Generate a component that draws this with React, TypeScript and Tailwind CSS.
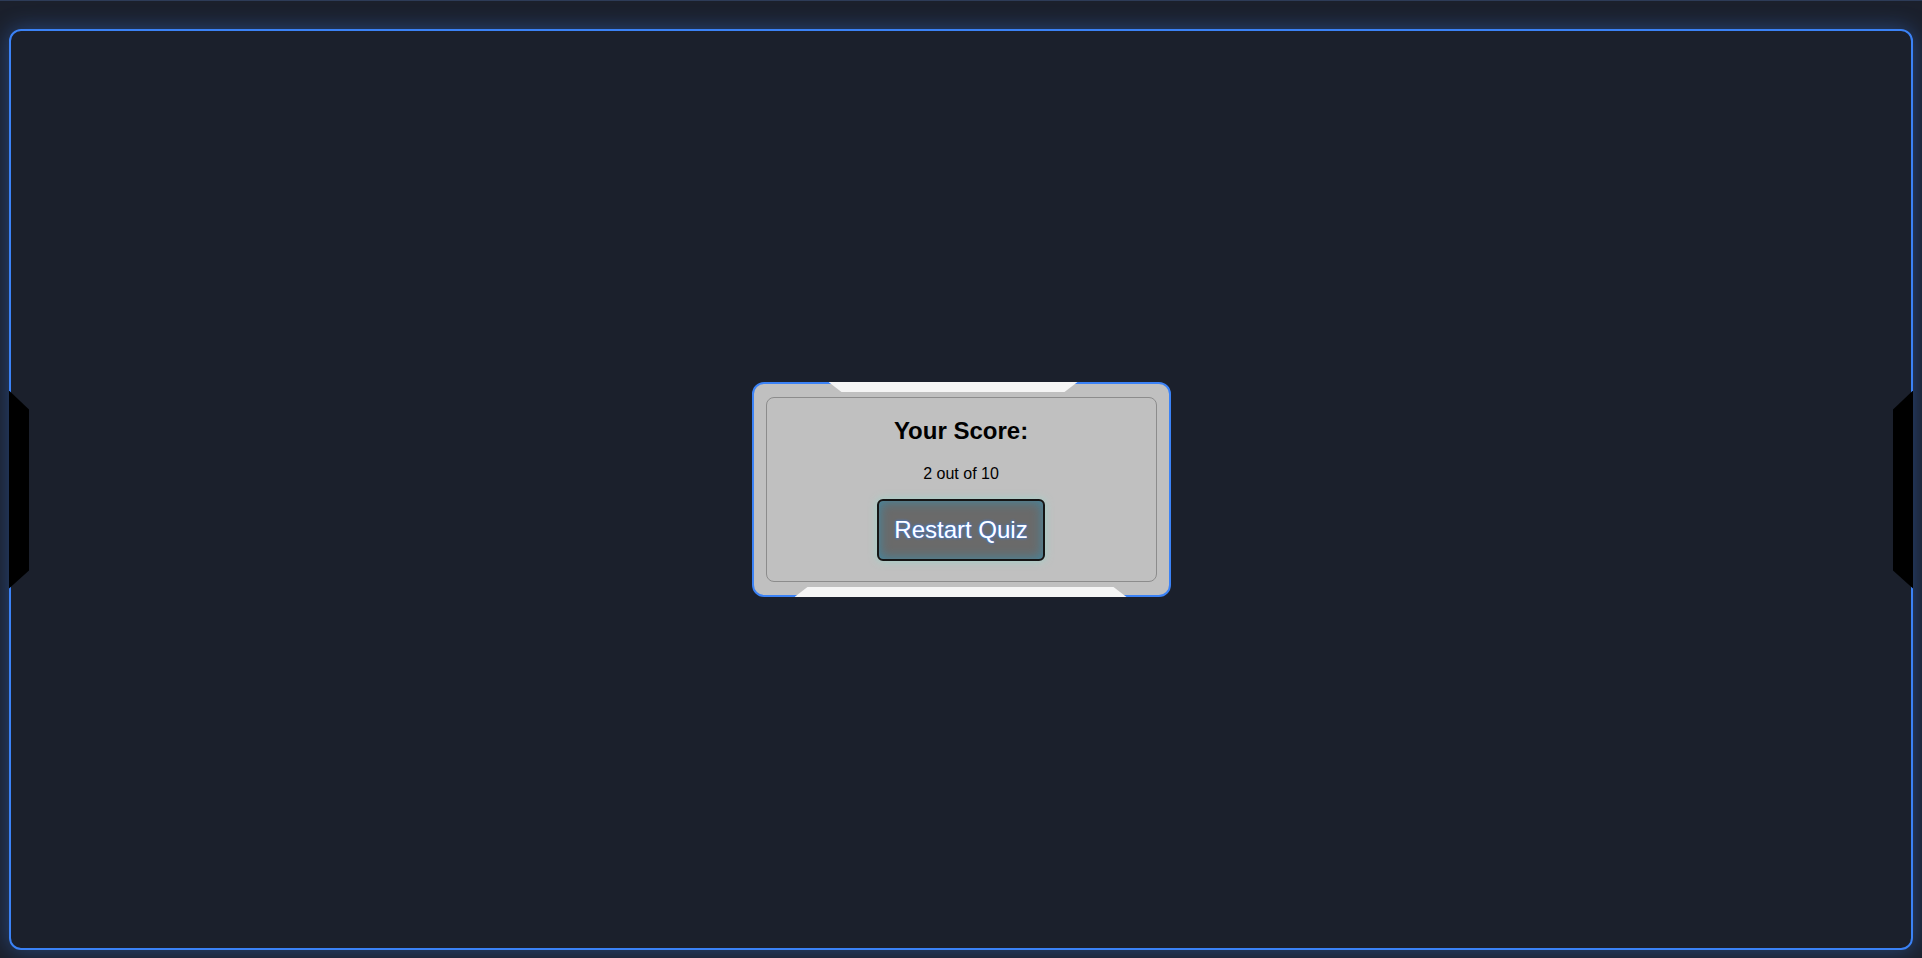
export default function App() {
  const score = 2;
  const total = 10;

  return (
    <div className="w-full h-[958px] bg-[#1b202c] border-t border-t-[#2d3b57] overflow-hidden font-['Liberation_Sans',Arial,sans-serif]">
      {/* outer frame */}
      <div className="mt-[28px] mx-[9px] h-[921px] rounded-xl border-2 border-[#3b82f6] shadow-[0_0_22px_rgba(59,130,246,0.4)] flex items-center justify-between">
        {/* left notch */}
        <div className="-ml-[2px] w-[20px] h-[198px] bg-black [clip-path:polygon(0_0,100%_19px,100%_calc(100%-18px),0_100%)]" />

        {/* score card */}
        <div className="relative w-[419px] h-[215px] rounded-xl border-2 border-[#3b82f6] bg-[#c0c0c0] px-[12px] py-[13px]">
          <div className="absolute top-[-2px] left-[75px] w-[249px] h-[10px] bg-[#f5f5f5] [clip-path:polygon(0_0,100%_0,calc(100%-13px)_100%,13px_100%)]" />
          <div className="absolute bottom-[-2px] left-[41px] w-[332px] h-[10px] bg-[#f5f5f5] [clip-path:polygon(13px_0,calc(100%-13px)_0,100%_100%,0_100%)]" />

          <div className="h-full rounded-lg border border-[#8c8c8c] flex flex-col items-center pt-[19px]">
            <h2 className="text-[24px] leading-[1.15] font-bold text-black">Your Score:</h2>
            <p className="mt-[20px] text-[16px] leading-[1.15] text-black">
              {score} out of {total}
            </p>
            <button className="mt-[16px] px-[15px] py-[15px] text-[24px] leading-[1.15] text-white rounded-md border-2 border-[#151515] bg-[#6a6a6a] shadow-[inset_0_0_12px_#3f8ba6,0_0_8px_rgba(140,220,205,0.7)] [text-shadow:0_0_3px_#3b82f6,0_0_1px_#3b82f6]">
              Restart Quiz
            </button>
          </div>
        </div>

        {/* right notch */}
        <div className="-mr-[2px] w-[20px] h-[198px] bg-black [clip-path:polygon(0_19px,100%_0,100%_100%,0_calc(100%-18px))]" />
      </div>
    </div>
  );
}
